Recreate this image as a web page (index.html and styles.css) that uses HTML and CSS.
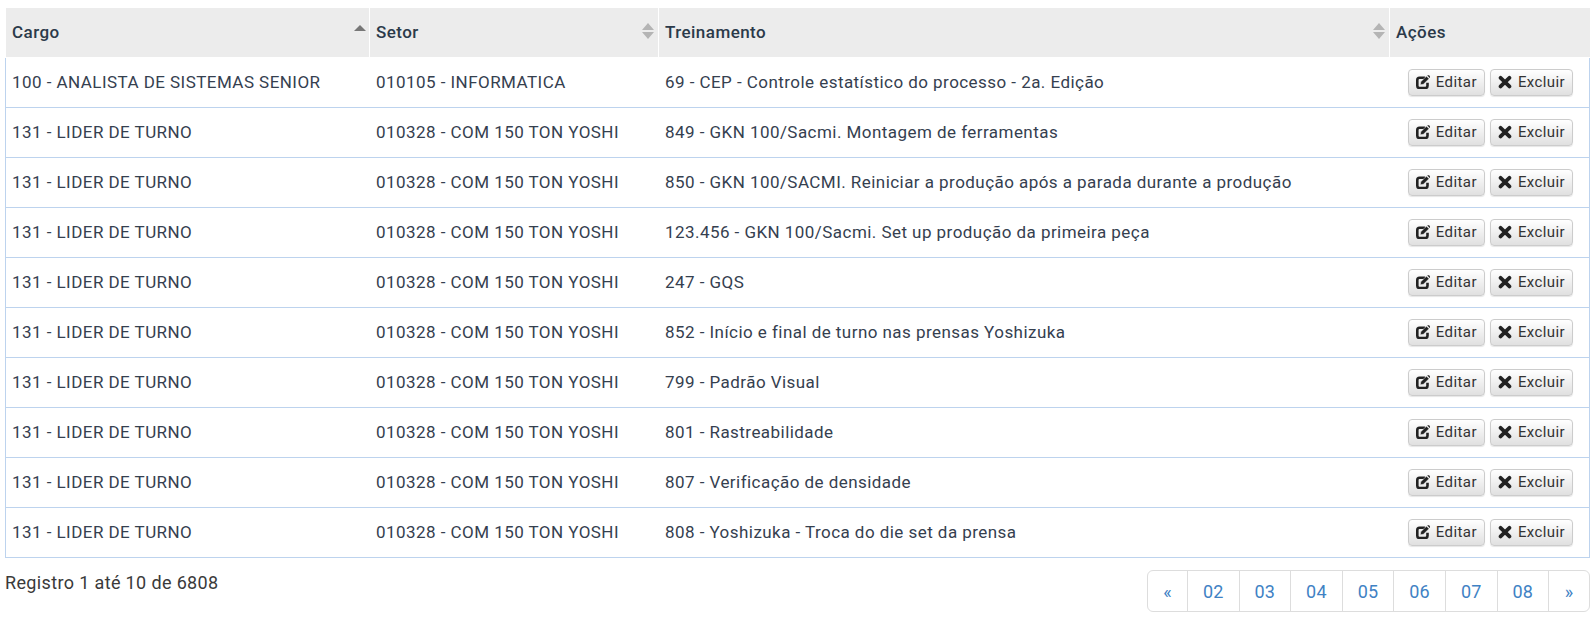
FILE: index.html
```html
<!DOCTYPE html>
<html lang="pt-BR">
<head>
<meta charset="utf-8">
<title>Treinamentos por cargo</title>
<link rel="stylesheet" href="styles.css">
</head>
<body>
<svg class="defs" width="0" height="0" aria-hidden="true">
  <symbol id="i-edit" viewBox="0 0 14 14"><path d="M9.200 2.800H3.500C2.200 2.800 1.300 3.700 1.300 5v5.800c0 1.300 .9 2.200 2.200 2.200h5.800c1.300 0 2.200-.9 2.200-2.200V7.800" fill="none" stroke="currentColor" stroke-width="2.600"/><path d="M4.800 6.700 4.400 9.700l3-.4L13 3.700 10.500 1.200z" fill="currentColor" stroke="#f2f2f2" stroke-width=".5"/><path d="M11.300 .5 13.700 2.900l.3-.3V1.200L13 .2h-1.400z" fill="currentColor"/></symbol>
  <symbol id="i-x" viewBox="0 0 14 14"><path d="M2.600 2.800 11.400 11.400M11.400 2.800 2.600 11.400" fill="none" stroke="currentColor" stroke-width="3.800" stroke-linecap="round"/></symbol>
</svg>
<table class="grid">
  <colgroup><col class="c-cargo"><col class="c-setor"><col class="c-trein"><col class="c-acoes"></colgroup>
  <thead>
    <tr>
      <th class="sort asc">Cargo</th>
      <th class="sort">Setor</th>
      <th class="sort">Treinamento</th>
      <th>Ações</th>
    </tr>
  </thead>
  <tbody>
    <tr><td>100 - ANALISTA DE SISTEMAS SENIOR</td><td>010105 - INFORMATICA</td><td>69 - CEP - Controle estatístico do processo - 2a. Edição</td><td class="acts"><a class="btn" href="#"><svg class="ic-e"><use href="#i-edit"/></svg>Editar</a><a class="btn" href="#"><svg class="ic-x"><use href="#i-x"/></svg>Excluir</a></td></tr>
    <tr><td>131 - LIDER DE TURNO</td><td>010328 - COM 150 TON YOSHI</td><td>849 - GKN 100/Sacmi. Montagem de ferramentas</td><td class="acts"><a class="btn" href="#"><svg class="ic-e"><use href="#i-edit"/></svg>Editar</a><a class="btn" href="#"><svg class="ic-x"><use href="#i-x"/></svg>Excluir</a></td></tr>
    <tr><td>131 - LIDER DE TURNO</td><td>010328 - COM 150 TON YOSHI</td><td>850 - GKN 100/SACMI. Reiniciar a produção após a parada durante a produção</td><td class="acts"><a class="btn" href="#"><svg class="ic-e"><use href="#i-edit"/></svg>Editar</a><a class="btn" href="#"><svg class="ic-x"><use href="#i-x"/></svg>Excluir</a></td></tr>
    <tr><td>131 - LIDER DE TURNO</td><td>010328 - COM 150 TON YOSHI</td><td>123.456 - GKN 100/Sacmi. Set up produção da primeira peça</td><td class="acts"><a class="btn" href="#"><svg class="ic-e"><use href="#i-edit"/></svg>Editar</a><a class="btn" href="#"><svg class="ic-x"><use href="#i-x"/></svg>Excluir</a></td></tr>
    <tr><td>131 - LIDER DE TURNO</td><td>010328 - COM 150 TON YOSHI</td><td>247 - GQS</td><td class="acts"><a class="btn" href="#"><svg class="ic-e"><use href="#i-edit"/></svg>Editar</a><a class="btn" href="#"><svg class="ic-x"><use href="#i-x"/></svg>Excluir</a></td></tr>
    <tr><td>131 - LIDER DE TURNO</td><td>010328 - COM 150 TON YOSHI</td><td>852 - Início e final de turno nas prensas Yoshizuka</td><td class="acts"><a class="btn" href="#"><svg class="ic-e"><use href="#i-edit"/></svg>Editar</a><a class="btn" href="#"><svg class="ic-x"><use href="#i-x"/></svg>Excluir</a></td></tr>
    <tr><td>131 - LIDER DE TURNO</td><td>010328 - COM 150 TON YOSHI</td><td>799 - Padrão Visual</td><td class="acts"><a class="btn" href="#"><svg class="ic-e"><use href="#i-edit"/></svg>Editar</a><a class="btn" href="#"><svg class="ic-x"><use href="#i-x"/></svg>Excluir</a></td></tr>
    <tr><td>131 - LIDER DE TURNO</td><td>010328 - COM 150 TON YOSHI</td><td>801 - Rastreabilidade</td><td class="acts"><a class="btn" href="#"><svg class="ic-e"><use href="#i-edit"/></svg>Editar</a><a class="btn" href="#"><svg class="ic-x"><use href="#i-x"/></svg>Excluir</a></td></tr>
    <tr><td>131 - LIDER DE TURNO</td><td>010328 - COM 150 TON YOSHI</td><td>807 - Verificação de densidade</td><td class="acts"><a class="btn" href="#"><svg class="ic-e"><use href="#i-edit"/></svg>Editar</a><a class="btn" href="#"><svg class="ic-x"><use href="#i-x"/></svg>Excluir</a></td></tr>
    <tr><td>131 - LIDER DE TURNO</td><td>010328 - COM 150 TON YOSHI</td><td>808 - Yoshizuka - Troca do die set da prensa</td><td class="acts"><a class="btn" href="#"><svg class="ic-e"><use href="#i-edit"/></svg>Editar</a><a class="btn" href="#"><svg class="ic-x"><use href="#i-x"/></svg>Excluir</a></td></tr>
  </tbody>
</table>
<div class="foot">
  <div class="info">Registro 1 até 10 de 6808</div>
  <nav class="pager">
    <a class="arrow" href="#">«</a><a href="#">02</a><a href="#">03</a><a href="#">04</a><a href="#">05</a><a href="#">06</a><a href="#">07</a><a href="#">08</a><a class="arrow" href="#">»</a>
  </nav>
</div>
</body>
</html>
```
FILE: styles.css
```css
* { box-sizing: border-box; }
html, body { margin: 0; padding: 0; background: #fff; }
body {
  padding: 8px 4px 0 5px;
  font-family: Roboto, "Liberation Sans", sans-serif;
  font-size: 17px;
  letter-spacing: .45px;
  color: #333;
}
.defs { position: absolute; }
.grid {
  width: 1585px;
  border-collapse: separate;
  border-spacing: 0;
  table-layout: fixed;
}
.c-cargo { width: 365px; }
.c-setor { width: 289px; }
.c-trein { width: 731px; }
.c-acoes { width: 200px; }
th {
  position: relative;
  height: 50px;
  padding: 0 6px 2px;
  background: #ececec;
  border-right: 1px solid #fff;
  border-bottom: 1px solid #fff;
  text-align: left;
  font-weight: 500;
  color: #2b3a4a;
}
th:first-child { border-left: 1px solid #fff; }
th:last-child { border-right: 0; }
.sort::before, .sort::after {
  content: "";
  position: absolute;
  right: 4px;
  width: 0;
  height: 0;
  border-left: 6px solid transparent;
  border-right: 6px solid transparent;
}
.sort::before { top: 15px; border-bottom: 7px solid #b4b4b4; }
.sort::after { top: 24px; border-top: 7px solid #b4b4b4; }
.asc::before { top: 17px; right: 3px; border-bottom: 6px solid #777; }
.asc::after { display: none; }
td {
  height: 50px;
  padding: 0 6px 2px;
  border-bottom: 1px solid #bdd3ee;
  color: #35404f;
  white-space: nowrap;
}
td:first-child { border-left: 1px solid #bdd3ee; }
td:last-child { border-right: 1px solid #bdd3ee; }
td.acts { text-align: right; padding: 0 16px 0 6px; }
.btn {
  display: inline-flex;
  align-items: center;
  gap: 6px;
  height: 27px;
  margin-left: 5px;
  padding: 0 7px 2px;
  border: 1px solid #ccc;
  border-radius: 4px;
  background: linear-gradient(#fff, #e0e0e0);
  box-shadow: 0 1px 1px rgba(0,0,0,.1);
  font-size: 15px;
  letter-spacing: .4px;
  color: #333;
  text-decoration: none;
  vertical-align: middle;
}
.ic-e { width: 14px; height: 14px; color: #222; }
.ic-x { width: 14px; height: 14px; color: #222; }
.foot {
  display: flex;
  justify-content: space-between;
  align-items: flex-start;
  margin-top: 12px;
}
.info { margin-top: 1px; line-height: 24px; font-size: 18px; letter-spacing: .36px; color: #3a3a3a; }
.pager {
  display: flex;
  height: 42px;
  border: 1px solid #ddd;
  border-radius: 6px;
  background: #fff;
}
.pager a {
  display: flex;
  align-items: center;
  justify-content: center;
  width: 51.600px;
  border-right: 1px solid #ddd;
  font-size: 18px;
  letter-spacing: .2px;
  color: #3f82c4;
  text-decoration: none;
}
.pager a.arrow { width: 39.900px; }
.pager a:last-child { border-right: 0; }
```
